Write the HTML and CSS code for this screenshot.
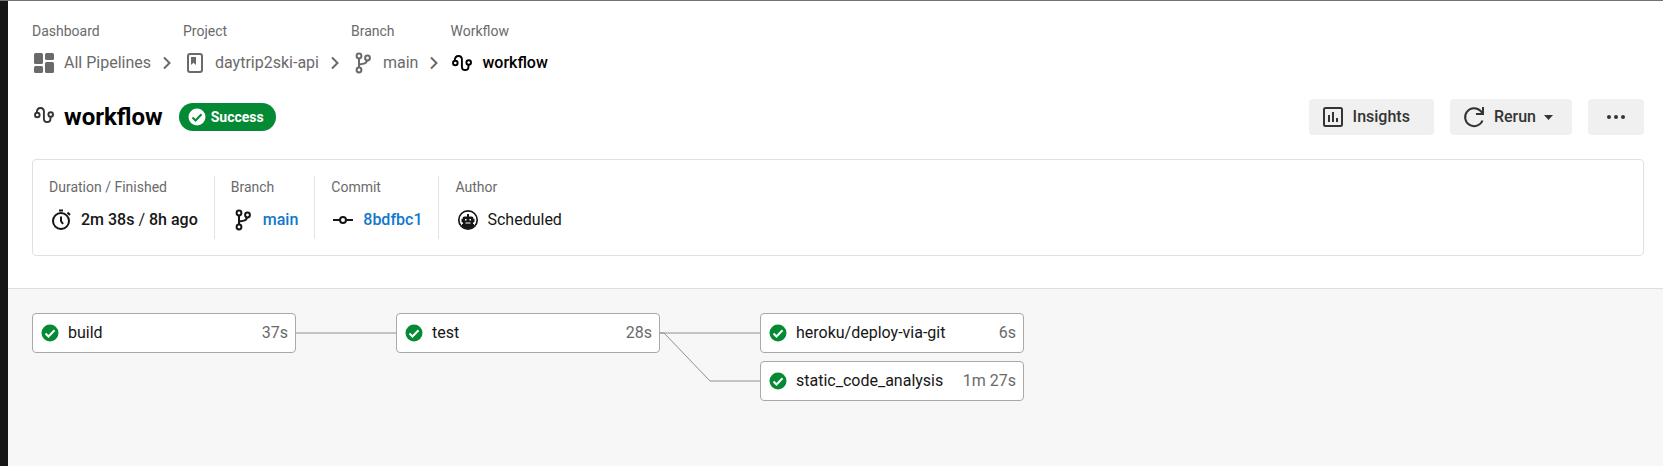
FILE: index.html
```html
<!DOCTYPE html>
<html lang="en">
<head>
<meta charset="utf-8">
<title>workflow</title>
<link rel="stylesheet" href="styles.css">
</head>
<body>
<svg class="sprite" aria-hidden="true">
  <symbol id="i-dashboard" viewBox="0 0 24 24">
    <rect x="2" y="2" width="9" height="11" rx="1.5"/><rect x="13" y="2" width="9" height="7" rx="1.5"/>
    <rect x="2" y="15" width="9" height="7" rx="1.5"/><rect x="13" y="11" width="9" height="11" rx="1.5"/>
  </symbol>
  <symbol id="i-project" viewBox="0 0 24 24">
    <rect x="5" y="3" width="14" height="18" rx="2" fill="none" stroke="currentColor" stroke-width="2"/>
    <path d="M8 6h5v8l-2.500-2.200L8 14z"/>
  </symbol>
  <symbol id="i-branch" viewBox="0 0 24 24">
    <g fill="none" stroke="currentColor" stroke-width="2">
      <circle cx="8" cy="5" r="2.400"/><circle cx="8" cy="19" r="2.400"/><circle cx="16.500" cy="7" r="2.400"/>
      <path d="M8 7.500v9M16 9.500c-.5 3-3 3.300-8 4"/>
    </g>
  </symbol>
  <symbol id="i-workflow" viewBox="0 0 24 24">
    <g fill="none" stroke="currentColor" stroke-width="1.900">
      <circle cx="5.300" cy="12" r="2.300"/><circle cx="18.700" cy="11.500" r="2.300"/>
      <path d="M4.800 9.700C4.800 6.600 6.300 5 8.500 5s3.400 1.500 3.400 3.600v6.800c0 2.100 1 3.600 3.200 3.600s3.400-1.500 3.400-3.600V13.800"/>
    </g>
  </symbol>
  <symbol id="i-chevron" viewBox="0 0 24 24">
    <path d="M9 6.500l5.500 5.500L9 17.500" fill="none" stroke="currentColor" stroke-width="2"/>
  </symbol>
  <symbol id="i-insights" viewBox="0 0 24 24">
    <rect x="3" y="3" width="18" height="18" rx="1.500" fill="none" stroke="currentColor" stroke-width="2"/>
    <path d="M7 10h2v7H7zM11 7h2v10h-2zM15 13h2v4h-2z"/>
  </symbol>
  <symbol id="i-rerun" viewBox="0 0 24 24">
    <path d="M20.500 15.500A9 9 0 1 1 18.700 6L20.500 8.500M21 2v7h-7" fill="none" stroke="currentColor" stroke-width="2"/>
  </symbol>
  <symbol id="i-clock" viewBox="0 0 24 24">
    <g fill="none" stroke="currentColor" stroke-width="2">
      <circle cx="12" cy="13" r="8"/><path d="M10 2.500h4M18.500 4.500l2.500 2.500M12 8.500V13l2 3"/>
    </g>
  </symbol>
  <symbol id="i-commit" viewBox="0 0 24 24">
    <path d="M2 12h7M15 12h7" stroke="currentColor" stroke-width="2"/>
    <circle cx="12" cy="12" r="3" fill="none" stroke="currentColor" stroke-width="2"/>
  </symbol>
  <symbol id="i-robot" viewBox="0 0 24 24">
    <circle cx="13" cy="12" r="9.200" fill="none" stroke="currentColor" stroke-width="1.700"/>
    <path d="M12 6h2v2.500h2.500a2 2 0 0 1 2 2v.5h1v3h-1v1H18v1h1v2.500c-3.500 3-8.500 3-12 0V16h1v-1h-.5v-1h-1v-3h1v-.5a2 2 0 0 1 2-2H12z"/>
    <path d="M10 11h1.500v1.500H10zM14.500 11H16v1.500h-1.500zM10.500 14.500h5v1h-5z" fill="#fff"/>
  </symbol>
  <symbol id="i-check" viewBox="0 0 20 20">
    <circle cx="10" cy="10" r="8.500"/>
    <path class="tick" d="M5.500 10.500l3 3 6-6.300" fill="none"/>
  </symbol>
</svg>

<div class="app">
  <div class="rail"></div>
  <main class="main">
    <header class="head">
      <nav class="crumbs" aria-label="Breadcrumb">
        <div class="crumb">
          <span class="label">Dashboard</span>
          <a class="value" href="#"><svg class="icon"><use href="#i-dashboard"/></svg>All Pipelines</a>
        </div>
        <svg class="icon sep"><use href="#i-chevron"/></svg>
        <div class="crumb">
          <span class="label">Project</span>
          <a class="value" href="#"><svg class="icon"><use href="#i-project"/></svg>daytrip2ski-api</a>
        </div>
        <svg class="icon sep"><use href="#i-chevron"/></svg>
        <div class="crumb">
          <span class="label">Branch</span>
          <a class="value" href="#"><svg class="icon"><use href="#i-branch"/></svg>main</a>
        </div>
        <svg class="icon sep"><use href="#i-chevron"/></svg>
        <div class="crumb">
          <span class="label">Workflow</span>
          <a class="value current" href="#" aria-current="page"><svg class="icon"><use href="#i-workflow"/></svg>workflow</a>
        </div>
      </nav>

      <div class="title-row">
        <svg class="icon title-icon"><use href="#i-workflow"/></svg>
        <h1 class="title">workflow</h1>
        <span class="badge"><svg class="icon-small"><use href="#i-check"/></svg>Success</span>
        <div class="actions">
          <button class="button" type="button"><svg class="icon"><use href="#i-insights"/></svg>Insights</button>
          <button class="button rerun" type="button"><svg class="icon"><use href="#i-rerun"/></svg>Rerun<svg class="caret" viewBox="0 0 9 5"><path d="M0 0h9L4.500 5z"/></svg></button>
          <button class="button more" type="button" aria-label="More actions"><svg class="icon" viewBox="0 0 24 24"><circle cx="5" cy="12" r="2"/><circle cx="12" cy="12" r="2"/><circle cx="19" cy="12" r="2"/></svg></button>
        </div>
      </div>

      <section class="card">
        <div class="fact">
          <span class="label">Duration / Finished</span>
          <span class="value strong"><svg class="icon"><use href="#i-clock"/></svg><span>2m 38s <span class="slash">/</span> 8h ago</span></span>
        </div>
        <div class="fact">
          <span class="label">Branch</span>
          <span class="value"><svg class="icon"><use href="#i-branch"/></svg><a class="link" href="#">main</a></span>
        </div>
        <div class="fact">
          <span class="label">Commit</span>
          <span class="value"><svg class="icon"><use href="#i-commit"/></svg><a class="link" href="#">8bdfbc1</a></span>
        </div>
        <div class="fact">
          <span class="label">Author</span>
          <span class="value"><svg class="icon"><use href="#i-robot"/></svg>Scheduled</span>
        </div>
      </section>
    </header>

    <section class="graph" aria-label="Jobs">
      <div class="stage">
        <a class="job" href="#"><svg class="job-icon"><use href="#i-check"/></svg><span class="job-name">build</span><span class="job-time">37s</span></a>
      </div>
      <svg class="wire" viewBox="0 0 100 88"><path d="M0 20h100"/></svg>
      <div class="stage">
        <a class="job" href="#"><svg class="job-icon"><use href="#i-check"/></svg><span class="job-name">test</span><span class="job-time">28s</span></a>
      </div>
      <svg class="wire" viewBox="0 0 100 88"><path d="M0 20h100M0 20h4L50 68h50"/></svg>
      <div class="stage">
        <a class="job" href="#"><svg class="job-icon"><use href="#i-check"/></svg><span class="job-name">heroku/deploy-via-git</span><span class="job-time">6s</span></a>
        <a class="job" href="#"><svg class="job-icon"><use href="#i-check"/></svg><span class="job-name">static_code_analysis</span><span class="job-time">1m 27s</span></a>
      </div>
    </section>
  </main>
</div>
</body>
</html>
```
FILE: styles.css
```css
* { box-sizing: border-box; }

body {
  margin: 0;
  font: 16px/24px Roboto, "Liberation Sans", sans-serif;
  color: #161616;
  background: #fff;
}

a { color: inherit; text-decoration: none; }

.sprite { display: none; }

.icon { width: 24px; height: 24px; flex: none; fill: currentColor; }

.app {
  display: flex;
  min-height: 100vh;
  border-top: 1px solid #7b7168;
}

.rail { width: 8px; flex: none; background: #161616; }

.main { flex: 1; display: flex; flex-direction: column; min-width: 0; }

.head { padding: 22px 19px 32px 24px; }

.crumbs { display: flex; align-items: flex-end; color: #6a6a6a; }
.crumb, .fact { display: flex; flex-direction: column; }
.crumb { gap: 12px; }
.label { font-size: 14px; line-height: 16px; color: #6a6a6a; }
.value { display: flex; align-items: center; gap: 8px; }
.sep { margin: 0 4px; }
.current { color: #000; font-weight: 500; }

.title-row { display: flex; align-items: center; margin-top: 24px; }
.title-icon { color: #343434; margin: 0 8px 4px 0; }
.title { margin: 0; font-size: 24px; line-height: 28px; font-weight: 700; color: #000; }

.badge {
  display: flex;
  align-items: center;
  gap: 4px;
  height: 28px;
  margin-left: 16px;
  padding: 0 12px 0 8px;
  border-radius: 14px;
  background: #048a34;
  color: #fff;
  font-size: 14px;
  font-weight: 700;
}
.icon-small { width: 20px; height: 20px; fill: #fff; stroke: #048a34; }

.actions { display: flex; gap: 16px; margin-left: auto; }
.button {
  display: flex;
  align-items: center;
  gap: 8px;
  height: 36px;
  padding: 0 24px 0 12px;
  border: 0;
  border-radius: 4px;
  background: #f0f0f0;
  color: #343434;
  font: inherit;
  font-weight: 500;
}
.rerun { padding-right: 19px; }
.more { padding: 0 16px; }
.caret { width: 9px; height: 5px; fill: currentColor; }

.card {
  display: flex;
  margin-top: 24px;
  padding: 16px 0;
  border: 1px solid #e0e0e0;
  border-radius: 4px;
}
.fact { gap: 13px; height: 63px; padding: 3px 16px; }
.fact + .fact { border-left: 1px solid #e3e3e3; }
.strong { font-weight: 500; }
.slash { font-weight: 400; }
.link { color: #0f77cc; font-weight: 500; }

.graph {
  flex: 1;
  display: flex;
  align-items: flex-start;
  padding: 24px;
  border-top: 1px solid #dedede;
  background: #f7f7f7;
}
.stage { display: flex; flex-direction: column; gap: 8px; width: 264px; flex: none; }
.job {
  display: flex;
  align-items: center;
  height: 40px;
  padding: 0 7px;
  border: 1px solid #a9a9a9;
  border-radius: 4px;
  background: #fff;
}
.job-icon { width: 20px; height: 20px; flex: none; fill: #048a34; stroke: #fff; }
.job-icon, .icon-small { stroke-width: 0; }
.tick { stroke-width: 2px; }
.job-name { margin-left: 8px; }
.job-time { margin-left: auto; color: #6a6a6a; }
.wire { width: 100px; height: 88px; flex: none; fill: none; stroke: #919191; stroke-width: 1; }
```
